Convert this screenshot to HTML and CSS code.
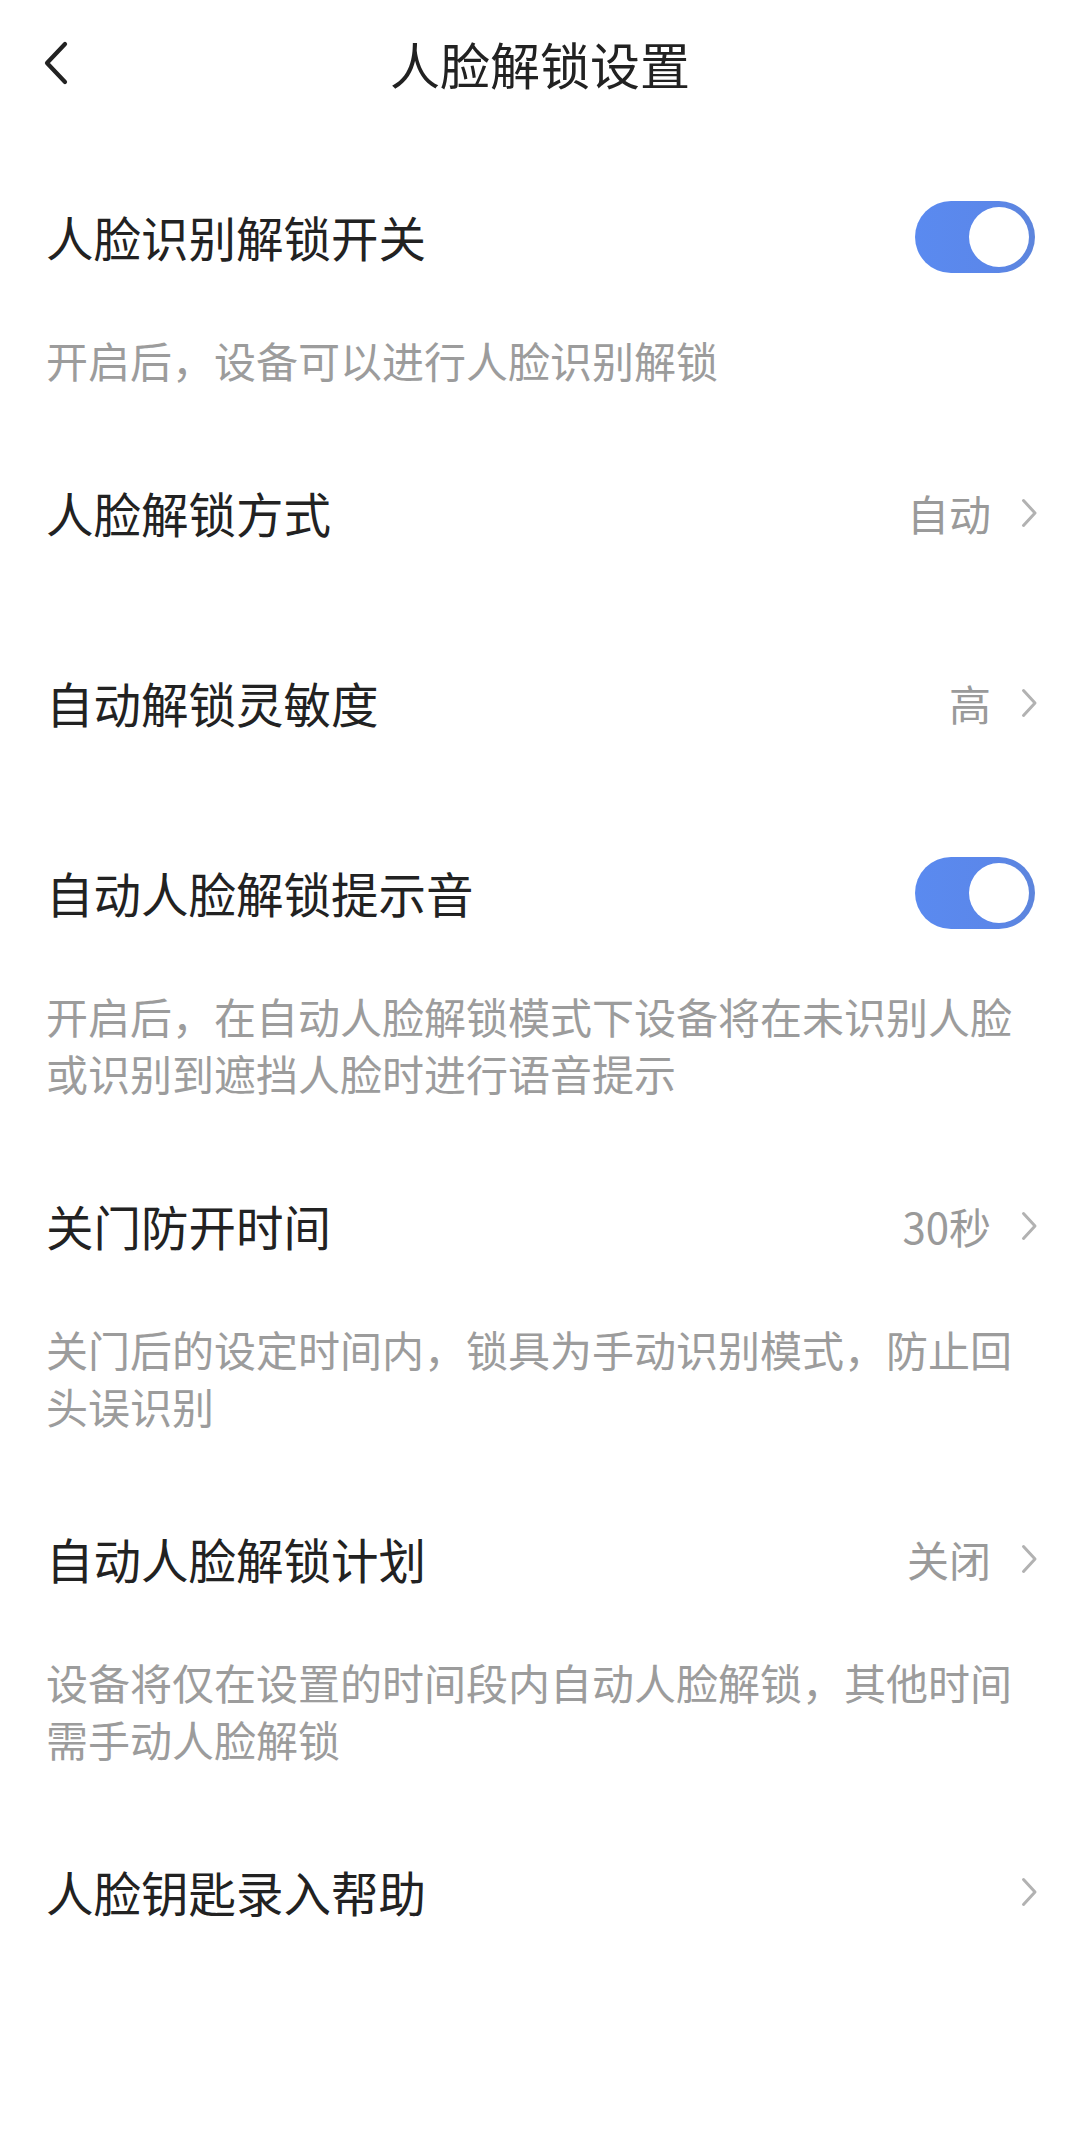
FILE: index.html
```html
<!DOCTYPE html>
<html lang="zh-CN">
<head>
<meta charset="utf-8">
<title>人脸解锁设置</title>
<link rel="stylesheet" href="styles.css">
</head>
<body>
<div class="page">
  <header class="header">
    <div class="back">
      <svg width="26" height="44" viewBox="0 0 26 44" aria-hidden="true">
        <polyline points="22,3 4,22 22,41" fill="none" stroke="#222" stroke-width="4.2" stroke-linecap="round" stroke-linejoin="round"/>
      </svg>
    </div>
    <h1 class="title">人脸解锁设置</h1>
    <div class="spacer"></div>
  </header>

  <main class="list">
    <section class="item with-desc">
      <div class="row">
        <span class="label">人脸识别解锁开关</span>
        <span class="toggle on"><span class="knob"></span></span>
      </div>
      <p class="desc">开启后，设备可以进行人脸识别解锁</p>
    </section>

    <section class="item">
      <div class="row">
        <span class="label">人脸解锁方式</span>
        <span class="right"><span class="value">自动</span><svg class="chev" width="17" height="30" viewBox="0 0 17 30"><polyline points="2.5,2.5 14,15 2.5,27.5" fill="none" stroke="#b2b2b2" stroke-width="3" stroke-linecap="round" stroke-linejoin="round"/></svg></span>
      </div>
    </section>

    <section class="item">
      <div class="row">
        <span class="label">自动解锁灵敏度</span>
        <span class="right"><span class="value">高</span><svg class="chev" width="17" height="30" viewBox="0 0 17 30"><polyline points="2.5,2.5 14,15 2.5,27.5" fill="none" stroke="#b2b2b2" stroke-width="3" stroke-linecap="round" stroke-linejoin="round"/></svg></span>
      </div>
    </section>

    <section class="item with-desc">
      <div class="row">
        <span class="label">自动人脸解锁提示音</span>
        <span class="toggle on"><span class="knob"></span></span>
      </div>
      <p class="desc">开启后，在自动人脸解锁模式下设备将在未识别人脸或识别到遮挡人脸时进行语音提示</p>
    </section>

    <section class="item with-desc">
      <div class="row">
        <span class="label">关门防开时间</span>
        <span class="right"><span class="value">30秒</span><svg class="chev" width="17" height="30" viewBox="0 0 17 30"><polyline points="2.5,2.5 14,15 2.5,27.5" fill="none" stroke="#b2b2b2" stroke-width="3" stroke-linecap="round" stroke-linejoin="round"/></svg></span>
      </div>
      <p class="desc">关门后的设定时间内，锁具为手动识别模式，防止回头误识别</p>
    </section>

    <section class="item with-desc">
      <div class="row">
        <span class="label">自动人脸解锁计划</span>
        <span class="right"><span class="value">关闭</span><svg class="chev" width="17" height="30" viewBox="0 0 17 30"><polyline points="2.5,2.5 14,15 2.5,27.5" fill="none" stroke="#b2b2b2" stroke-width="3" stroke-linecap="round" stroke-linejoin="round"/></svg></span>
      </div>
      <p class="desc">设备将仅在设置的时间段内自动人脸解锁，其他时间需手动人脸解锁</p>
    </section>

    <section class="item">
      <div class="row">
        <span class="label">人脸钥匙录入帮助</span>
        <span class="right"><svg class="chev" width="17" height="30" viewBox="0 0 17 30"><polyline points="2.5,2.5 14,15 2.5,27.5" fill="none" stroke="#b2b2b2" stroke-width="3" stroke-linecap="round" stroke-linejoin="round"/></svg></span>
      </div>
    </section>
  </main>
</div>
</body>
</html>
```

FILE: styles.css
```css
* {
  box-sizing: border-box;
}

html, body {
  margin: 0;
  padding: 0;
  background: #ffffff;
}

body {
  font-family: "Noto Sans CJK SC", "Noto Sans", sans-serif;
  color: #222222;
  width: 1080px;
  min-height: 2133px;
}

.page {
  width: 1080px;
}

.header {
  height: 126px;
  display: grid;
  grid-template-columns: 1fr auto 1fr;
  align-items: center;
  padding: 0 43px;
}

.back {
  display: flex;
  align-items: center;
  height: 44px;
}

.back svg {
  display: block;
}

.title {
  margin: 0;
  font-size: 50px;
  font-weight: 400;
  line-height: 60px;
  color: #222222;
  letter-spacing: 0;
}

.list {
  padding-top: 51px;
}

.item {
  padding-bottom: 70px;
}

.item.with-desc {
  padding-bottom: 65px;
}

.row {
  height: 120px;
  display: flex;
  align-items: center;
  justify-content: space-between;
  padding: 0 43px 0 46px;
}

.label {
  font-size: 47.5px;
  line-height: 60px;
  color: #222222;
}

.right {
  display: flex;
  align-items: center;
  gap: 30px;
}

.value {
  font-size: 42px;
  line-height: 56px;
  color: #9a9a9a;
}

.chev {
  display: block;
  margin-right: -1px;
}

.desc {
  margin: 34px 0 0 0;
  padding: 0 43px 0 46px;
  font-size: 42px;
  line-height: 57px;
  color: #9c9c9c;
}

.toggle {
  width: 120px;
  height: 72px;
  border-radius: 36px;
  background: linear-gradient(90deg, #5a8af0 0%, #5b87ea 60%, #5d85dc 100%);
  display: flex;
  align-items: center;
  justify-content: flex-end;
  padding-right: 6px;
  margin-right: 2px;
}

.knob {
  width: 60px;
  height: 60px;
  border-radius: 50%;
  background: #ffffff;
}
```
